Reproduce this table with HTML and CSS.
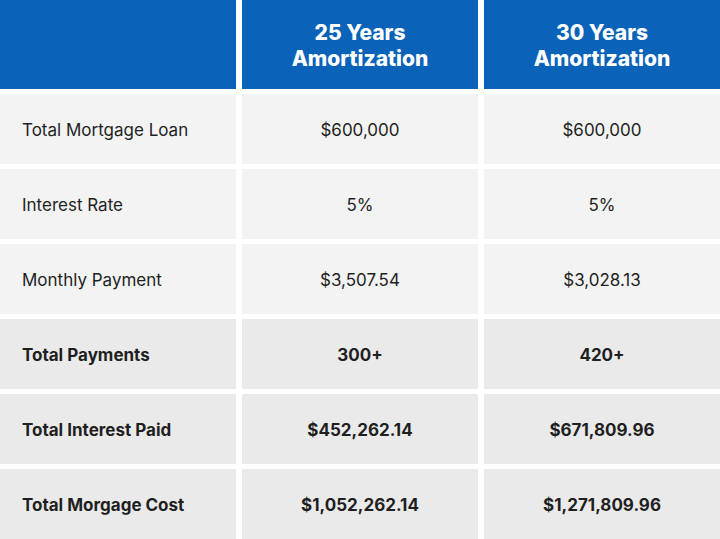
FILE: index.html
```html
<!DOCTYPE html>
<html>
<head>
<meta charset="utf-8">
<link rel="stylesheet" href="styles.css">
</head>
<body>
<div class="table">
  <div class="head"></div>
  <div class="head">25 Years<br>Amortization</div>
  <div class="head">30 Years<br>Amortization</div>

  <div class="cell label light">Total Mortgage Loan</div>
  <div class="cell light">$600,000</div>
  <div class="cell light">$600,000</div>

  <div class="cell label light">Interest Rate</div>
  <div class="cell light">5%</div>
  <div class="cell light">5%</div>

  <div class="cell label light">Monthly Payment</div>
  <div class="cell light">$3,507.54</div>
  <div class="cell light">$3,028.13</div>

  <div class="cell label dark">Total Payments</div>
  <div class="cell dark">300+</div>
  <div class="cell dark">420+</div>

  <div class="cell label dark">Total Interest Paid</div>
  <div class="cell dark">$452,262.14</div>
  <div class="cell dark">$671,809.96</div>

  <div class="cell label dark">Total Morgage Cost</div>
  <div class="cell dark">$1,052,262.14</div>
  <div class="cell dark">$1,271,809.96</div>
</div>
</body>
</html>
```
FILE: styles.css
```css
html, body {
  margin: 0;
  padding: 0;
  background: #ffffff;
}
.table {
  width: 720px;
  height: 539px;
  display: grid;
  grid-template-columns: 236px 236px 236px;
  grid-template-rows: 89px repeat(6, 70px);
  column-gap: 6px;
  row-gap: 5px;
  font-family: "Inter", "Liberation Sans", sans-serif;
  color: #1f1f1f;
}
.head {
  background: #0a63b8;
  color: #ffffff;
  font-weight: 800;
  font-size: 21px;
  line-height: 26px;
  display: flex;
  align-items: center;
  justify-content: center;
  text-align: center;
  padding-top: 2px;
}
.cell {
  display: flex;
  align-items: center;
  justify-content: center;
  font-size: 17px;
  padding-top: 1px;
}
.cell.label {
  justify-content: flex-start;
  padding-left: 22px;
}
.light {
  background: #f3f3f3;
}
.dark {
  background: #eaeaea;
  font-weight: 700;
}
```
